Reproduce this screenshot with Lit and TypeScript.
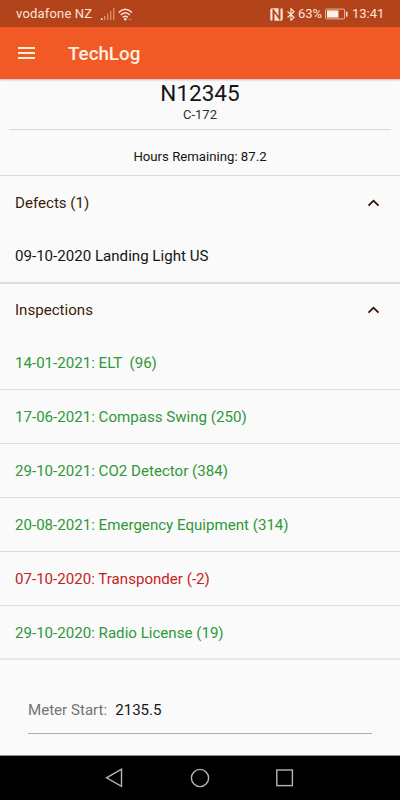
import { LitElement, html, css } from "lit";
import { customElement } from "lit/decorators.js";
import { classMap } from "lit/directives/class-map.js";

interface Inspection {
  text: string;
  overdue?: boolean;
}

const INSPECTIONS: Inspection[] = [
  { text: "14-01-2021: ELT  (96)" },
  { text: "17-06-2021: Compass Swing (250)" },
  { text: "29-10-2021: CO2 Detector (384)" },
  { text: "20-08-2021: Emergency Equipment (314)" },
  { text: "07-10-2020: Transponder (-2)", overdue: true },
  { text: "29-10-2020: Radio License (19)" },
];

@customElement("status-bar")
class StatusBar extends LitElement {
  static styles = css`
    :host {
      display: flex;
      align-items: center;
      height: 27px;
      box-sizing: border-box;
      padding: 1px 16px 0 16px;
      background: #b2431b;
      color: #fbe3d8;
      font-size: 13px;
      line-height: 26px;
    }
    svg { display: block; flex: none; }
    .carrier { width: 85px; letter-spacing: 0.18px; white-space: nowrap; }
    .wifi { margin-left: 3px; }
    .spacer { flex: 1; }
    .bt { margin-left: 4px; }
    .pct { width: 27px; margin-left: 3px; font-size: 13px; letter-spacing: -0.1px; white-space: nowrap; }
    .clock { width: 32px; font-size: 13px; white-space: nowrap; margin-left: 4px; }
  `;
  render() {
    return html`
      <span class="carrier">vodafone NZ</span>
      <svg width="14" height="12" viewBox="0 0 14 12">
        <rect x="0" y="10" width="1.5" height="2" fill="#fbe3d8" />
        <g fill="#d58d70">
          <rect x="3" y="8" width="1.4" height="4" />
          <rect x="6" y="5.5" width="1.4" height="6.5" />
          <rect x="9" y="3" width="1.4" height="9" />
          <rect x="12" y="0" width="1.4" height="12" />
        </g>
      </svg>
      <svg class="wifi" width="16" height="13" viewBox="0 0 16 13">
        <g fill="none" stroke="#fbe3d8" stroke-width="1.5">
          <path d="M.7 4.6Q7.3-2.2 13.9 4.6" />
          <path d="M2.8 7.1Q7.3 2.5 11.8 7.1" />
          <path d="M4.9 9.4Q7.3 7.1 9.7 9.4" />
        </g>
        <circle cx="7.3" cy="11.2" r="1.3" fill="#fbe3d8" />
        <path d="M10 10.7h4.6l-1.2 1.6h-2.5z" fill="#c66b48" />
      </svg>
      <span class="spacer"></span>
      <svg width="13" height="13" viewBox="0 0 13 13">
        <path
          d="M2 .3H9.2Q8 .3 8.5 1.2V8L3.2.6 2.5 1.5V11.5Q2.5 12.7 1.4 12.7 .3 12.7.3 11V2Q.3.3 2 .3Z"
          fill="#fbe3d8"
        />
        <path
          d="M11 12.7H3.8Q5 12.7 4.5 11.8V5L9.8 12.4 10.5 11.5V1.5Q10.5.3 11.6.3 12.7.3 12.7 2V11Q12.7 12.7 11 12.7Z"
          fill="#fbe3d8"
        />
      </svg>
      <svg class="bt" width="8" height="13" viewBox="0 0 8 13">
        <path
          d="M.5 3.5 7 9.3 4 12.3V.7L7 3.7.5 9.5"
          fill="none" stroke="#fbe3d8" stroke-width="1.2"
        />
      </svg>
      <span class="pct">63%</span>
      <svg width="23" height="12" viewBox="0 0 23 12">
        <rect x=".6" y="1.1" width="19" height="9.8" rx=".8" fill="none" stroke="#e9b8a2" stroke-width="1" />
        <rect x="2" y="2.4" width="11.5" height="7.2" fill="#fdeee7" />
        <rect x="21" y="3.6" width="1.5" height="5" fill="#fbe3d8" />
      </svg>
      <span class="clock">13:41</span>
    `;
  }
}

@customElement("section-header")
class SectionHeader extends LitElement {
  static properties = { label: {} };
  declare label: string;
  static styles = css`
    :host {
      display: flex;
      align-items: center;
      justify-content: space-between;
      height: 54px;
      padding: 0 20px 0 15px;
      color: #3a1d08;
    }
    svg { display: block; }
  `;
  render() {
    return html`
      <span>${this.label}</span>
      <svg width="13" height="8" viewBox="0 0 13 8">
        <path d="M1.5 6.6 6.5 1.7 11.5 6.6" fill="none" stroke="#310c02" stroke-width="1.7" />
      </svg>
    `;
  }
}

@customElement("app-root")
class AppRoot extends LitElement {
  static styles = css`
    :host {
      display: flex;
      flex-direction: column;
      height: 800px;
      width: 400px;
      overflow: hidden;
      background: #fafafa;
      color: #151515;
      font-family: Roboto, "Liberation Sans", sans-serif;
      font-size: 15.1px;
    }
    .appbar {
      display: flex;
      align-items: center;
      flex: none;
      height: 52px;
      padding-left: 18px;
      gap: 33px;
      background: #f15a24;
      color: #fff0e2;
      font-size: 18.8px;
      font-weight: 500;
      box-shadow: 0 1px 2px rgba(0, 0, 0, 0.25);
    }
    .title { padding-top: 2px; }
    .menu { display: block; }
    .aircraft {
      height: 49px;
      padding-top: 1px;
      margin: 0 9px;
      border-bottom: 1px solid #d9d9d9;
      text-align: center;
    }
    .reg { font-size: 22.5px; line-height: 26px; }
    .model { font-size: 13px; line-height: 17px; color: #303030; }
    .hours {
      height: 45px;
      line-height: 53px;
      text-align: center;
      font-size: 13.2px;
      border-bottom: 1px solid #d9d9d9;
    }
    .inspections { height: 52px; }
    .defect {
      height: 52px;
      line-height: 52px;
      padding-left: 15px;
      border-bottom: 2px solid #dedede;
    }
    .item {
      height: 53px;
      line-height: 54px;
      padding-left: 15px;
      border-bottom: 1px solid #d5e0ec;
      color: #2f9838;
      white-space: pre;
    }
    .item.overdue { color: #c4231c; }
    .item:last-child {
      height: 52px;
      border-bottom: 2px solid #e8e8e8;
    }
    .meter {
      display: flex;
      gap: 8px;
      height: 46px;
      line-height: 47px;
      margin: 27px 28px 0;
      border-bottom: 1px solid #adadad;
    }
    .meter-label { color: #737373; }
    .spacer { flex: 1; }
    .nav {
      display: flex;
      flex: none;
      justify-content: center;
      align-items: center;
      gap: 65px;
      height: 44px;
      border-top: 1px solid #8d8d8d;
      background: #000;
    }
    .nav svg { display: block; fill: none; stroke: #b5b5b5; stroke-width: 1.4; }
  `;
  render() {
    return html`
      <status-bar></status-bar>
      <div class="appbar">
        <svg class="menu" width="17" height="12" viewBox="0 0 17 12">
          <path d="M0 1h17M0 6h17M0 11h17" stroke="#fff0dc" stroke-width="1.8" />
        </svg>
        <span class="title">TechLog</span>
      </div>
      <div class="aircraft">
        <div class="reg">N12345</div>
        <div class="model">C-172</div>
      </div>
      <div class="hours">Hours Remaining: 87.2</div>
      <section-header .label=${"Defects (1)"}></section-header>
      <div class="defect">09-10-2020 Landing Light US</div>
      <section-header class="inspections" .label=${"Inspections"}></section-header>
      <div>
        ${INSPECTIONS.map(
          (i) => html`<div class=${classMap({ item: true, overdue: !!i.overdue })}>${i.text}</div>`
        )}
      </div>
      <div class="meter">
        <span class="meter-label">Meter Start:</span><span>2135.5</span>
      </div>
      <div class="spacer"></div>
      <div class="nav">
        <svg width="20" height="20" viewBox="0 0 20 20"><path d="M16.5 1.2V18.4L1.5 9.8Z" /></svg>
        <svg width="20" height="20" viewBox="0 0 20 20"><circle cx="10" cy="10" r="8.6" /></svg>
        <svg width="20" height="20" viewBox="0 0 20 20"><rect x="1.8" y="2" width="15.6" height="15.6" /></svg>
      </div>
    `;
  }
}
